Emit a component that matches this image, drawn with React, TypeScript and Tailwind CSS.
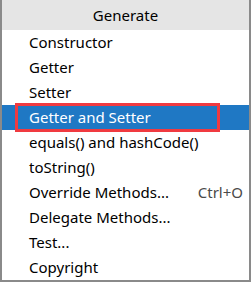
import React from "react";

const items: { label: string; shortcut?: string }[] = [
  { label: "Constructor" },
  { label: "Getter" },
  { label: "Setter" },
  { label: "Getter and Setter" },
  { label: "equals() and hashCode()" },
  { label: "toString()" },
  { label: "Override Methods...", shortcut: "Ctrl+O" },
  { label: "Delegate Methods..." },
  { label: "Test..." },
  { label: "Copyright" },
];

const App: React.FC = () => {
  const selected = 3;

  return (
    <div
      className="w-[251px] h-[282px] bg-white border-x-2 border-b-2 border-[#8a8a8a] flex flex-col text-[15px] text-black"
      style={{ fontFamily: '"Noto Sans", "Open Sans", sans-serif' }}
    >
      <div className="h-[30px] bg-[#e5e5e5] flex items-center justify-center shrink-0">
        Generate
      </div>
      {items.map((item, i) => (
        <div
          key={item.label}
          className={
            i === selected
              ? "relative h-[25px] flex items-center pl-[27px] pr-[6px] bg-[#1f78c4] text-white"
              : "relative h-[25px] flex items-center pl-[27px] pr-[6px]"
          }
        >
          <span className="flex-1 whitespace-nowrap">{item.label}</span>
          {item.shortcut && (
            <span className="text-[#4a4a4a] whitespace-nowrap">{item.shortcut}</span>
          )}
          {i === selected && (
            <div className="absolute left-[13px] w-[205px] top-[-2px] bottom-[-2px] border-[3px] border-[#f03a40]" />
          )}
        </div>
      ))}
    </div>
  );
};

export default App;
